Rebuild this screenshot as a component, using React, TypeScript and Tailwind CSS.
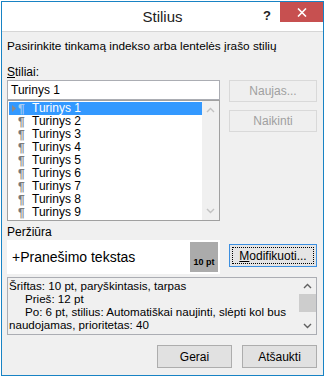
import { ReactNode } from "react"

const font = { fontFamily: '"Liberation Sans", Arial, sans-serif' }

function Chevron({ up, color }: { up?: boolean; color: string }) {
  return (
    <svg width="9" height="6" viewBox="0 0 9 6">
      <path d={up ? "M1 5 L4.5 1.5 L8 5" : "M1 1 L4.5 4.5 L8 1"} fill="none" stroke={color} strokeWidth="1.4" />
    </svg>
  )
}

function Btn({ children, disabled, def, className }: { children: ReactNode; disabled?: boolean; def?: boolean; className?: string }) {
  if (disabled) {
    return (
      <div className={"flex items-center justify-center border border-[#d9d9d9] bg-[#efefef] text-[#a0a0a0] text-[12px] " + (className ?? "")}>
        {children}
      </div>
    )
  }
  return (
    <div className={"flex items-center justify-center border text-[12px] text-black " + (def ? "border-[#3c8fe0] bg-[#e5e5e5] p-[2px]" : "border-[#adadad] bg-[#e1e1e1]") + " " + (className ?? "")}>
      {def ? <div className="w-full h-full flex items-center justify-center border border-dotted border-black">{children}</div> : children}
    </div>
  )
}

const items = ["Turinys 1", "Turinys 2", "Turinys 3", "Turinys 4", "Turinys 5", "Turinys 6", "Turinys 7", "Turinys 8", "Turinys 9"]

export default function App() {
  return (
    <div className="w-[325px] h-[377px] bg-white p-px" style={font}>
      <div className="w-full h-full border border-[#1883c4] flex flex-col bg-[#f0f0f0]">
        {/* title bar */}
        <div className="relative h-[30px] bg-white border-b border-[#d6d6d6] shrink-0">
          <div className="text-center text-[15px] leading-[30px] text-[#222]">Stilius</div>
          <div className="absolute left-[261px] top-[4px] text-[13px] font-bold text-[#222]">?</div>
          <div className="absolute right-0 top-0 w-[43px] h-[20px] bg-[#c75050] flex items-center justify-center">
            <svg width="10" height="9" viewBox="0 0 10 9">
              <path d="M1 0.5 L9 8.5 M9 0.5 L1 8.5" stroke="white" strokeWidth="1.6" />
            </svg>
          </div>
        </div>

        <div className="pl-[5px] pr-[6px] flex flex-col">
          <div className="mt-[6px] text-[11.8px] leading-[16px] text-black">Pasirinkite tinkamą indekso arba lentelės įrašo stilių</div>
          <div className="mt-[10px] text-[12px] leading-[16px] text-black"><span className="underline">S</span>tiliai:</div>

          <div className="flex">
            <div className="w-[213px] flex flex-col">
              <div className="h-[20px] border border-[#abadb3] bg-white text-[12px] leading-[18px] pl-[3px] text-black">Turinys 1</div>
              <div className="h-[121px] border border-[#a0a0a0] bg-white flex">
                <div className="flex-1 pt-px pl-px">
                  {items.map((t, i) => (
                    <div key={t} className={"h-[13px] flex items-center text-[12px] leading-[13px] " + (i === 0 ? "bg-[#3399ff] text-white" : "text-black")}>
                      <span className="w-[9px] flex justify-center">
                        {i === 0 && (
                          <svg width="4" height="7" viewBox="0 0 4 7"><path d="M0 0 L4 3.5 L0 7 Z" fill="#8a8a8a" /></svg>
                        )}
                      </span>
                      <span className={"text-[12px] leading-[12px] font-bold w-[14px] " + (i === 0 ? "text-[#a9cdf0]" : "text-[#7a7a7a]")}>¶</span>
                      <span>{t}</span>
                    </div>
                  ))}
                </div>
                <div className="w-[17px] bg-[#f0f0f0] flex flex-col justify-between items-center py-[6px]">
                  <Chevron up color="#c2c2c2" />
                  <Chevron color="#c2c2c2" />
                </div>
              </div>
            </div>
            <div className="ml-[9px] flex flex-col">
              <Btn disabled className="w-[88px] h-[22px]">Naujas...</Btn>
              <Btn disabled className="w-[88px] h-[22px] mt-[8px]">Naikinti</Btn>
            </div>
          </div>

          <div className="mt-[3px] text-[12px] leading-[16px] text-black">Peržiūra</div>
          <div className="flex items-start">
            <div className="w-[213px] h-[34px] bg-white p-[2px] flex">
              <div className="flex-1 flex items-center pl-[3px] text-[14px] text-black">+Pranešimo tekstas</div>
              <div className="w-[28px] bg-[#ababab] flex items-end justify-center pb-[3px] text-[9px] font-bold text-black">10 pt</div>
            </div>
            <Btn def className="ml-[9px] mt-[4px] w-[88px] h-[23px]"><span><span className="underline">M</span>odifikuoti...</span></Btn>
          </div>

          <div className="mt-[3px] h-[58px] border border-[#abadb3] bg-[#f0f0f0] flex">
            <div className="flex-1 pl-px pt-px text-[11.6px] leading-[13px] text-black">
              <div>Šriftas: 10 pt, paryškintasis, tarpas</div>
              <div className="pl-[16px]">Prieš: 12 pt</div>
              <div className="pl-[16px]">Po: 6 pt, stilius: Automatiškai naujinti, slėpti kol bus</div>
              <div>naudojamas, prioritetas: 40</div>
            </div>
            <div className="w-[17px] flex flex-col items-center">
              <div className="h-[16px] flex items-center"><Chevron up color="#606060" /></div>
              <div className="w-[17px] h-[18px] bg-[#cdcdcd]" />
              <div className="flex-1" />
              <div className="h-[16px] flex items-center"><Chevron color="#606060" /></div>
            </div>
          </div>

          <div className="flex justify-end mt-[10px] gap-[10px]">
            <Btn className="w-[75px] h-[23px]">Gerai</Btn>
            <Btn className="w-[75px] h-[23px]">Atšaukti</Btn>
          </div>
        </div>
      </div>
    </div>
  )
}
